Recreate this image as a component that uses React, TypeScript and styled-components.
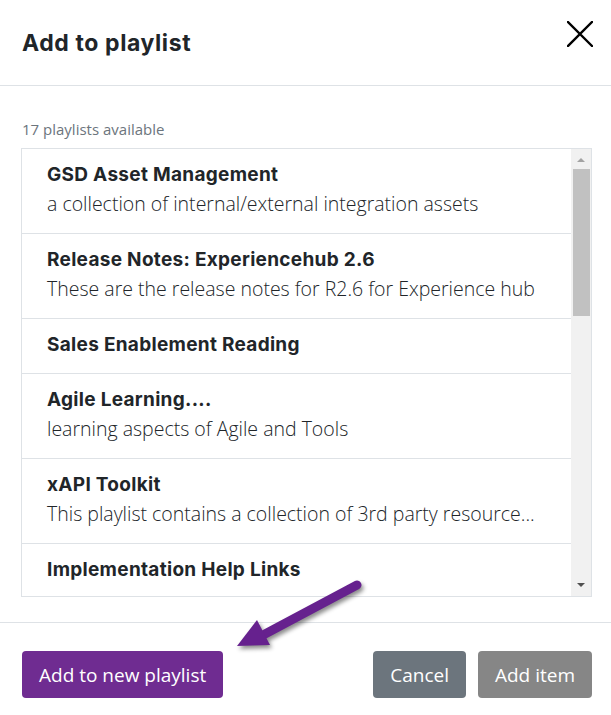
import React from "react";
import styled, { createGlobalStyle } from "styled-components";

const Global = createGlobalStyle`
  html, body { margin: 0; padding: 0; background: #fff; }
  body { font-family: "Open Sans", "Liberation Sans", sans-serif; color: #212529; }
  * { box-sizing: border-box; }
`;

const Dialog = styled.div`
  position: relative;
  width: 611px;
  height: 715px;
  display: flex;
  flex-direction: column;
  background: #fff;
  overflow: hidden;
`;

const Header = styled.header`
  flex: 0 0 86px;
  display: flex;
  align-items: center;
  justify-content: space-between;
  padding: 0 18px 0 22px;
  border-bottom: 1px solid #dee2e6;
`;

const Title = styled.h1`
  margin: 0;
  font-family: "Inter", "Liberation Sans", sans-serif;
  font-weight: 700;
  font-size: 23px;
  letter-spacing: 0.6px;
  color: #212529;
`;

const CloseButton = styled.button`
  width: 26px;
  height: 26px;
  padding: 0;
  border: 0;
  background: transparent;
  display: flex;
  align-items: center;
  justify-content: center;
  margin-top: -17px;
  cursor: pointer;
`;

const Body = styled.div`
  flex: 1 1 auto;
  min-height: 0;
  display: flex;
  flex-direction: column;
  padding: 33px 19px 25px 21px;
  border-bottom: 1px solid #dee2e6;
`;

const Count = styled.div`
  font-size: 15px;
  line-height: 20px;
  color: #6c757d;
  margin: 0 0 9px 1px;
`;

const ListBox = styled.div`
  flex: 1 1 auto;
  min-height: 0;
  display: flex;
  border: 1px solid #dee2e6;
  overflow: hidden;
`;

const List = styled.ul`
  flex: 1;
  list-style: none;
  margin: 0;
  padding: 0;
  overflow: hidden;
`;

const Row = styled.li`
  padding: 12px 20px 14px 25px;
  border-bottom: 1px solid #dee2e6;
`;

const RowTitle = styled.div`
  font-family: "Inter", "Liberation Sans", sans-serif;
  font-weight: 700;
  font-size: 19px;
  letter-spacing: 0.3px;
  line-height: 28px;
  color: #212529;
`;

const RowDesc = styled.div`
  font-weight: 300;
  font-size: 19.5px;
  line-height: 30px;
  color: #212529;
  white-space: nowrap;
`;

const ScrollTrack = styled.div`
  flex: 0 0 20px;
  background: #f1f1f1;
  display: flex;
  flex-direction: column;
  align-items: center;
  padding: 2px 0;
`;

const ScrollArrow = styled.div<{ $down?: boolean; $dark?: boolean }>`
  height: 18px;
  width: 100%;
  display: flex;
  align-items: center;
  justify-content: center;
  &::before {
    content: "";
    width: 0;
    height: 0;
    border-left: 4px solid transparent;
    border-right: 4px solid transparent;
    ${(p) =>
      p.$down
        ? `border-top: 4px solid ${p.$dark ? "#505050" : "#a3a3a3"};`
        : `border-bottom: 4px solid ${p.$dark ? "#505050" : "#a3a3a3"};`}
  }
`;

const ScrollThumb = styled.div`
  width: 17px;
  height: 147px;
  background: #c1c1c1;
`;

const ScrollSpacer = styled.div`
  flex: 1;
`;

const Footer = styled.footer`
  flex: 0 0 92px;
  display: flex;
  align-items: flex-start;
  padding: 28px 19px 0 22px;
  gap: 12px;
`;

const Button = styled.button<{ $variant: "primary" | "secondary" | "disabled" }>`
  height: 47px;
  padding: 0 17px;
  border: 0;
  border-radius: 4px;
  font-family: "Open Sans", "Liberation Sans", sans-serif;
  font-size: 19px;
  color: #fff;
  cursor: pointer;
  background: ${(p) =>
    p.$variant === "primary" ? "#6f2c91" : p.$variant === "secondary" ? "#6c757d" : "#868686"};
  &:first-child {
    margin-right: auto;
  }
`;

const ArrowOverlay = styled.svg`
  position: absolute;
  left: 225px;
  top: 572px;
  width: 150px;
  height: 90px;
  overflow: visible;
  pointer-events: none;
  filter: drop-shadow(2px 3px 2px rgba(0, 0, 0, 0.45));
`;

const playlists = [
  { title: "GSD Asset Management", desc: "a collection of internal/external integration assets" },
  { title: "Release Notes: Experiencehub 2.6", desc: "These are the release notes for R2.6 for Experience hub" },
  { title: "Sales Enablement Reading" },
  { title: "Agile Learning....", desc: "learning aspects of Agile and Tools" },
  { title: "xAPI Toolkit", desc: "This playlist contains a collection of 3rd party resource..." },
  { title: "Implementation Help Links" },
];

export default function App() {
  return (
    <>
      <Global />
      <Dialog>
        <Header>
          <Title>Add to playlist</Title>
          <CloseButton aria-label="Close">
            <svg width="26" height="26" viewBox="0 0 26 26">
              <path d="M1 1 L25 25 M25 1 L1 25" stroke="#000" strokeWidth="2.4" strokeLinecap="square" />
            </svg>
          </CloseButton>
        </Header>
        <Body>
          <Count>17 playlists available</Count>
          <ListBox>
            <List>
              {playlists.map((p) => (
                <Row key={p.title}>
                  <RowTitle>{p.title}</RowTitle>
                  {p.desc && <RowDesc>{p.desc}</RowDesc>}
                </Row>
              ))}
            </List>
            <ScrollTrack>
              <ScrollArrow />
              <ScrollThumb />
              <ScrollSpacer />
              <ScrollArrow $down $dark />
            </ScrollTrack>
          </ListBox>
        </Body>
        <Footer>
          <Button $variant="primary">Add to new playlist</Button>
          <Button $variant="secondary">Cancel</Button>
          <Button $variant="disabled">Add item</Button>
        </Footer>
        <ArrowOverlay viewBox="0 0 150 90">
          <line x1="132" y1="13" x2="40" y2="62" stroke="#66218e" strokeWidth="9" strokeLinecap="round" />
          <polygon points="12,74 32,48 45,73" fill="#66218e" />
        </ArrowOverlay>
      </Dialog>
    </>
  );
}
